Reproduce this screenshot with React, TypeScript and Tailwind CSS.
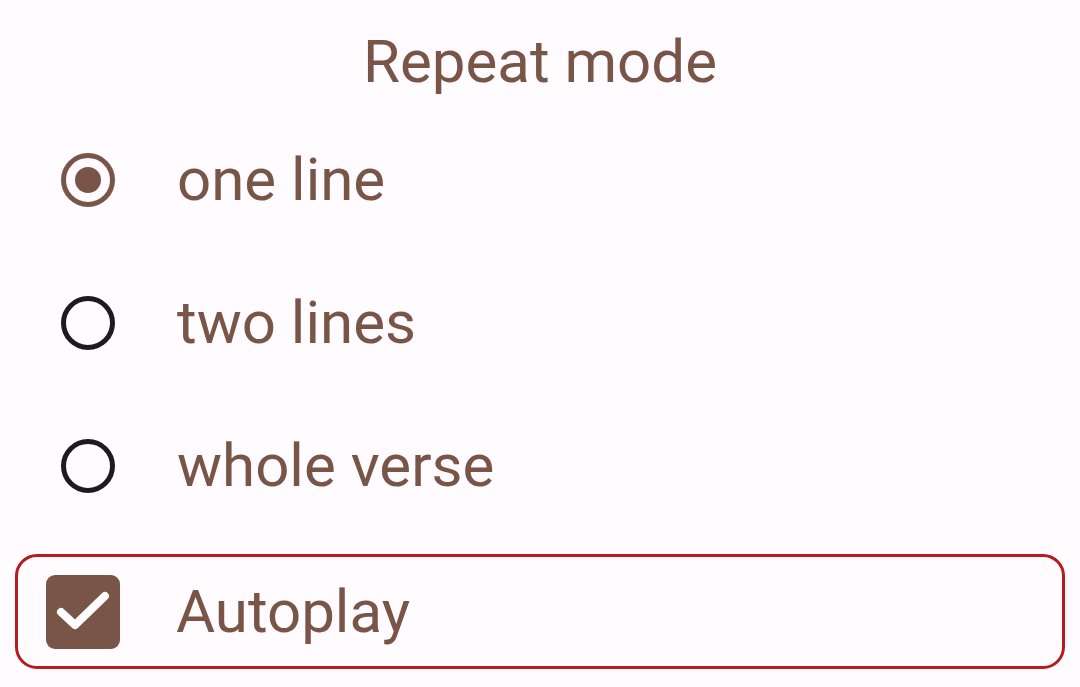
import { useState } from 'react';

const options = ['one line', 'two lines', 'whole verse'];

const App = () => {
    const [mode, setMode] = useState(0);
    const [autoplay, setAutoplay] = useState(true);

    return (
        <div className="w-[1080px] h-[687px] bg-[#fffbfe] text-[#795548] font-['Roboto',sans-serif] overflow-hidden">
            {/* Title */}
            <div className="h-[108px] pt-[22px] text-center text-[60px] leading-[80px]">Repeat mode</div>

            {/* Radio options */}
            {options.map((opt, i) => (
                <button
                    key={opt}
                    onClick={() => setMode(i)}
                    className="flex items-center h-[143px] w-full pl-[61px]"
                >
                    <span
                        className={`w-[54px] h-[54px] rounded-full border-[5px] flex items-center justify-center ${
                            mode === i ? 'border-[#795548]' : 'border-[#1c1b1f]'
                        }`}
                    >
                        {mode === i && <span className="w-[26px] h-[26px] rounded-full bg-[#795548]" />}
                    </span>
                    <span className="ml-[62px] text-[60px] leading-none">{opt}</span>
                </button>
            ))}

            {/* Autoplay */}
            <div className="px-[15px] pt-[17px]">
                <button
                    onClick={() => setAutoplay(!autoplay)}
                    className="flex items-center w-full h-[115px] border-[3.5px] border-[#b71c1c] rounded-[22px] pl-[28px]"
                >
                    <span className="w-[74px] h-[74px] rounded-[9px] bg-[#795548] flex items-center justify-center">
                        {autoplay && (
                            <svg width="74" height="74" viewBox="0 0 74 74" fill="none">
                                <path d="M15 37L29 50L59 21" stroke="white" strokeWidth="8" strokeLinecap="round" strokeLinejoin="round" />
                            </svg>
                        )}
                    </span>
                    <span className="ml-[56px] text-[60px] leading-none">Autoplay</span>
                </button>
            </div>
        </div>
    );
};

export default App;
